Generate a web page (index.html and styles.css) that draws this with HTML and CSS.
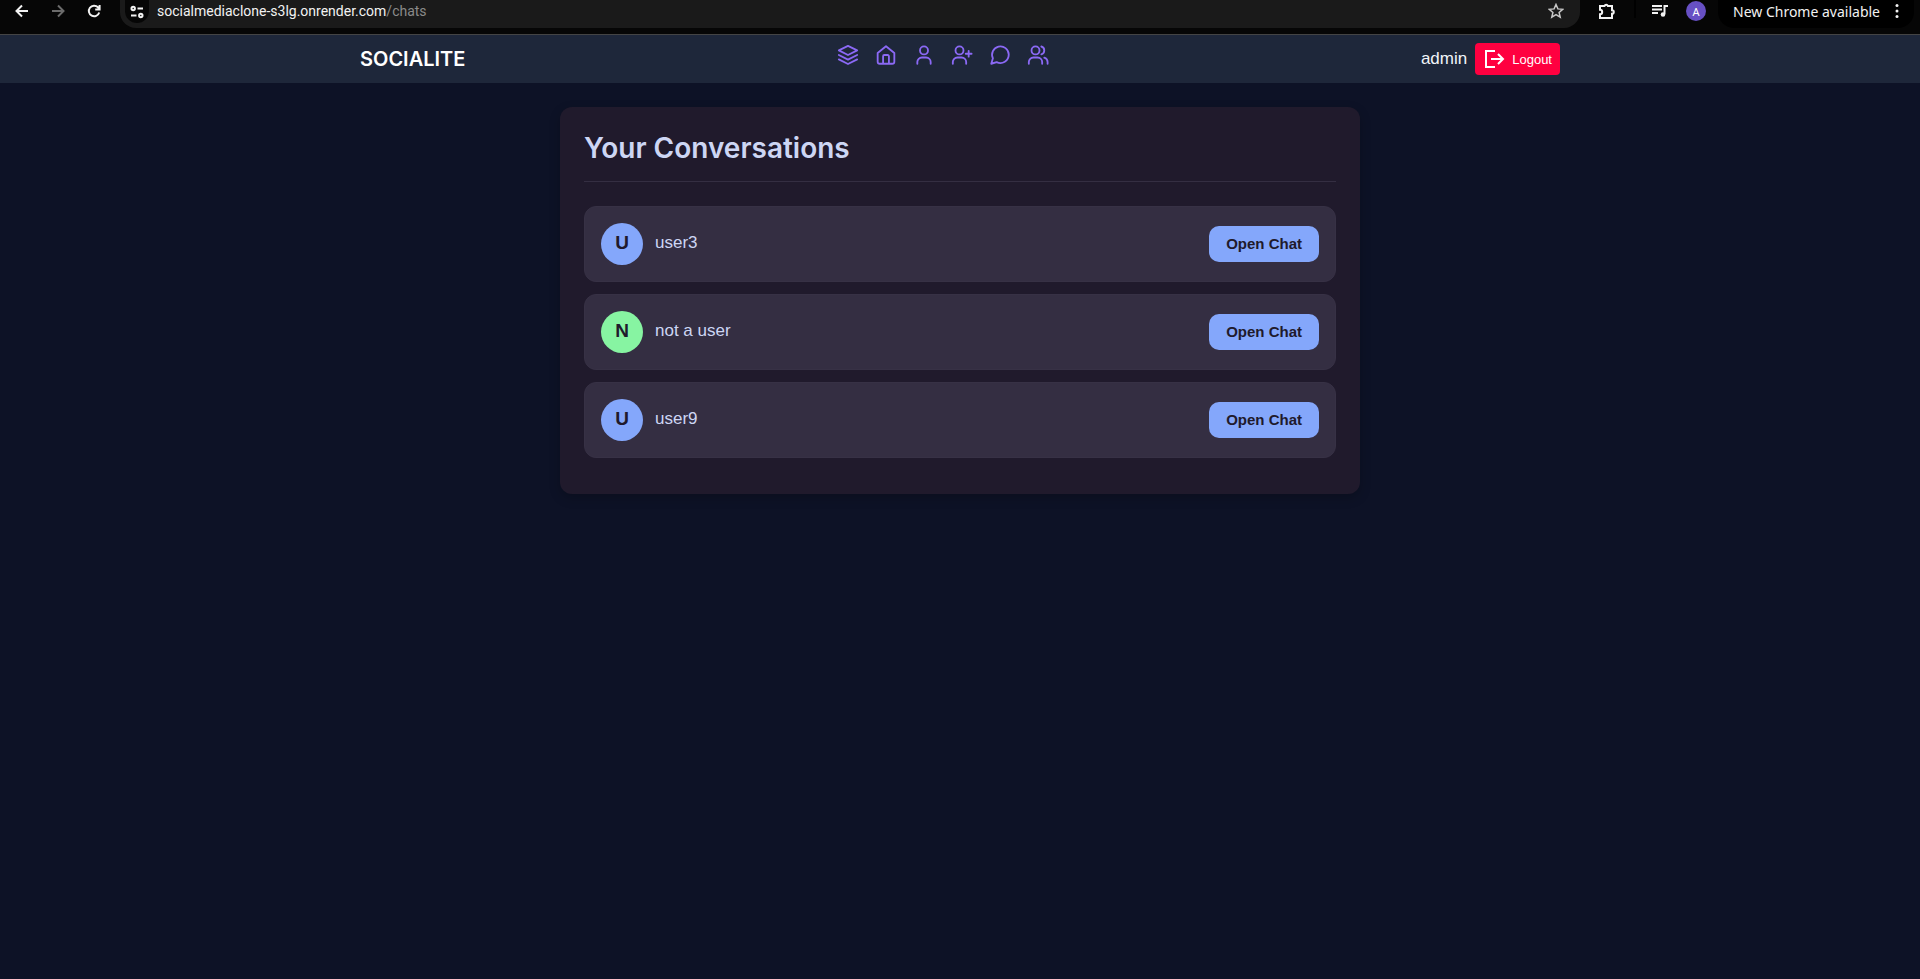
FILE: index.html
```
<!DOCTYPE html>
<html lang="en">
<head>
<meta charset="utf-8">
<title>Socialite – Chats</title>
<link rel="stylesheet" href="styles.css">
</head>
<body>
<div class="browser">
  <button class="tool" aria-label="Back"><svg width="14" height="14" viewBox="0 0 14 14"><path d="M13 7H2M7 1.500 1.500 7 7 12.500"/></svg></button>
  <button class="tool tool-off" aria-label="Forward"><svg width="14" height="14" viewBox="0 0 14 14"><path d="M1 7h11M7 1.500 12.500 7 7 12.500"/></svg></button>
  <button class="tool" aria-label="Reload"><svg width="14" height="14" viewBox="0 0 14 14"><path d="M12.200 8.500A5.300 5.300 0 1 1 11 3.300L12.500 5M12.600 1v4.500H8.200"/></svg></button>
  <div class="address">
    <button class="site" aria-label="Site information"><svg width="14" height="14" viewBox="0 0 14 14"><circle cx="3.200" cy="3.500" r="1.700"/><circle cx="10.800" cy="10.500" r="1.700"/><path d="M7.500 3.500H13M1 10.500h5.500"/></svg></button>
    <span class="url">socialmediaclone-s3lg.onrender.com<span class="path">/chats</span></span>
    <button class="star" aria-label="Bookmark"><svg width="16" height="16" viewBox="0 0 16 16"><path d="m8 1.500 1.900 4.400 4.800.4-3.600 3.200 1.100 4.700L8 11.700l-4.200 2.500 1.100-4.700-3.600-3.200 4.800-.4z"/></svg></button>
  </div>
  <button class="tool ext" aria-label="Extensions"><svg width="18" height="18" viewBox="0 0 18 18"><path d="M2 4h4.500a1.800 1.800 0 0 1 3.400 0H14v4.200a1.800 1.800 0 0 1 0 3.600V16H2v-3.800a2.200 2.200 0 0 0 0-4.400z"/></svg></button>
  <span class="divider"></span>
  <button class="tool media" aria-label="Media"><svg width="16" height="14" viewBox="0 0 16 14"><path d="M0 2h10M0 5.500h10M0 9h6M12.500 10V2H16"/><circle class="solid" cx="11" cy="10.500" r="2.300"/></svg></button>
  <button class="profile" aria-label="Account">A</button>
  <button class="update">New Chrome available <svg width="4" height="16" viewBox="0 0 4 16"><circle cx="2" cy="2.500" r="1.500"/><circle cx="2" cy="8" r="1.500"/><circle cx="2" cy="13.500" r="1.500"/></svg></button>
</div>

<header class="navbar">
  <div class="nav-inner">
    <a class="brand" href="#">SOCIALITE</a>
    <nav class="links">
      <a href="#" aria-label="Feed"><svg viewBox="0 0 24 24"><path d="M12 1 23 6.500 12 12 1 6.500zM1 12l11 5.500L23 12M1 17.300l11 5.500 11-5.500"/></svg></a>
      <a href="#" aria-label="Home"><svg viewBox="0 0 24 24"><path d="M2 9.500 12 1.500l10 8V20a2.500 2.500 0 0 1-2.500 2.500h-15A2.500 2.500 0 0 1 2 20zM8.500 22v-8.500A1.500 1.500 0 0 1 10 12h4a1.500 1.500 0 0 1 1.500 1.500V22"/></svg></a>
      <a href="#" aria-label="Profile"><svg viewBox="0 0 24 24"><circle cx="12" cy="6.500" r="4.800"/><path d="M4 22.500v-2a5.500 5.500 0 0 1 5.500-5.500h5a5.500 5.500 0 0 1 5.500 5.500v2"/></svg></a>
      <a href="#" aria-label="Add friend"><svg viewBox="0 0 24 24"><circle cx="9" cy="6.500" r="4.800"/><path d="M1 22.500v-2A5.500 5.500 0 0 1 6.500 15h5a5.500 5.500 0 0 1 5.500 5.500v2M20 7v7M16.500 10.500h7"/></svg></a>
      <a href="#" aria-label="Chats"><svg viewBox="0 0 24 24"><path d="M22.500 11.500a10 10 0 0 1-14.500 9L1.500 22.500 3.500 16A10 10 0 1 1 22.500 11.500z"/></svg></a>
      <a href="#" aria-label="Friends"><svg viewBox="0 0 24 24"><circle cx="9" cy="6.500" r="4.800"/><path d="M1 22.500v-2A5.500 5.500 0 0 1 6.500 15h5a5.500 5.500 0 0 1 5.500 5.500v2M16 1.800a4.900 4.900 0 0 1 0 9.400M23.500 22.500v-2a5.500 5.500 0 0 0-4-5.300"/></svg></a>
    </nav>
    <div class="account">
      <span>admin</span>
      <button class="logout"><svg width="20" height="20" viewBox="0 0 20 20"><path d="M10 2H1v16h9M6 10h12M13 5l5 5-5 5"/></svg>Logout</button>
    </div>
  </div>
</header>

<main class="card">
  <h1>Your Conversations</h1>
  <ul class="list">
    <li class="item"><span class="avatar">U</span><span class="name">user3</span><button class="open">Open Chat</button></li>
    <li class="item"><span class="avatar green">N</span><span class="name">not a user</span><button class="open">Open Chat</button></li>
    <li class="item"><span class="avatar">U</span><span class="name">user9</span><button class="open">Open Chat</button></li>
  </ul>
</main>
</body>
</html>
```
FILE: styles.css
```
* { box-sizing: border-box; }
body {
  margin: 0;
  min-height: 100vh;
  background: #0d1226;
  color: #cdd6f4;
  font-family: "Liberation Sans", Arial, sans-serif;
}
button { border: 0; padding: 0; background: none; color: inherit; font-family: inherit; cursor: pointer; }
svg { display: block; fill: none; stroke: currentColor; }
a { color: inherit; text-decoration: none; }

.browser {
  display: flex;
  align-items: flex-start;
  height: 35px;
  padding-left: 15px;
  background: #060606;
  border-bottom: 1px solid #444;
  color: #f2f2f2;
  font: 14px/22px "Noto Sans", sans-serif;
  overflow: hidden;
}
.tool { height: 22px; width: 14px; margin-right: 22px; display: flex; align-items: center; justify-content: center; flex: none; }
.tool svg { stroke-width: 2; flex: none; }
.tool-off { color: #6b6b6b; }
.address {
  flex: 1;
  display: flex;
  margin-left: -3px;
  height: 28px;
  padding: 0 16px 0 5px;
  background: #1a1a1a;
  border-radius: 0 0 16px 16px;
}
.site { width: 24px; height: 23px; background: #060606; border-radius: 0 0 12px 12px; display: flex; align-items: center; justify-content: center; }
.site svg { stroke-width: 2; }
.url { flex: 1; padding-left: 8px; font-family: Roboto, sans-serif; font-size: 14px; }
.path { color: #8a8a8a; }
.star { height: 22px; color: #c8c8c8; }
.star svg { stroke-width: 1.500; }
.ext { margin: 0 18px 0 18px; width: 18px; }
.divider { width: 2px; height: 18px; margin-right: 16px; background: #000; }
.media { width: 16px; margin-right: 18px; }
.solid { fill: currentColor; stroke: none; }
.profile { width: 20px; height: 20px; margin: 1px 12px 0 0; border-radius: 50%; background: #6750c4; font-size: 11px; color: #fff; }
.update { display: flex; align-items: center; gap: 15px; width: 196px; height: 28px; margin-right: 6px; padding: 0 0 6px 15px; background: #000; border-radius: 0 0 16px 16px; font-size: 14px; white-space: nowrap; }
.update svg { fill: currentColor; stroke: none; }

.navbar { background: #1e273a; }
.nav-inner {
  display: flex;
  align-items: center;
  justify-content: space-between;
  max-width: 1200px;
  height: 48px;
  margin: 0 auto;
}
.brand { color: #fff; font: 600 20px/24px Inter, sans-serif; }
.links { display: flex; gap: 18px; padding-bottom: 8px; color: #8b69f5; }
.links svg { width: 20px; height: 20px; stroke-width: 2.200; stroke-linejoin: round; stroke-linecap: round; overflow: visible; }
.account { display: flex; align-items: center; gap: 8px; color: #f1f5f9; font-size: 17px; }
.logout {
  display: flex;
  align-items: center;
  gap: 7px;
  height: 32px;
  padding: 0 8px 0 10px;
  border-radius: 4px;
  background: #ff0040;
  color: #fff;
  font-size: 13px;
}
.logout svg { stroke-width: 2; }

.card {
  max-width: 800px;
  margin: 24px auto;
  padding: 24px;
  border-radius: 12px;
  background: #201a2c;
  box-shadow: 0 4px 12px rgba(0, 0, 0, .2);
}
h1 {
  margin: 0 0 24px;
  padding-bottom: 16px;
  border-bottom: 1px solid #342e42;
  font: 600 28px/34px Inter, sans-serif;
}
.list { margin: 0; padding: 0; list-style: none; }
.item {
  display: flex;
  align-items: center;
  gap: 12px;
  margin-bottom: 12px;
  padding: 16px;
  border: 1px solid #373145;
  border-radius: 12px;
  background: #342e42;
}
.avatar {
  width: 42px;
  height: 42px;
  border-radius: 50%;
  background: #84a7fb;
  color: #201a2c;
  font-size: 19px;
  font-weight: 700;
  line-height: 40px;
  text-align: center;
}
.green { background: #87f4a2; }
.name { flex: 1; padding-bottom: 2px; font-size: 17px; }
.open {
  height: 36px;
  padding: 0 17px 2px;
  border-radius: 10px;
  background: #84a7fb;
  color: #201a2c;
  font-size: 15px;
  font-weight: 700;
}
```
